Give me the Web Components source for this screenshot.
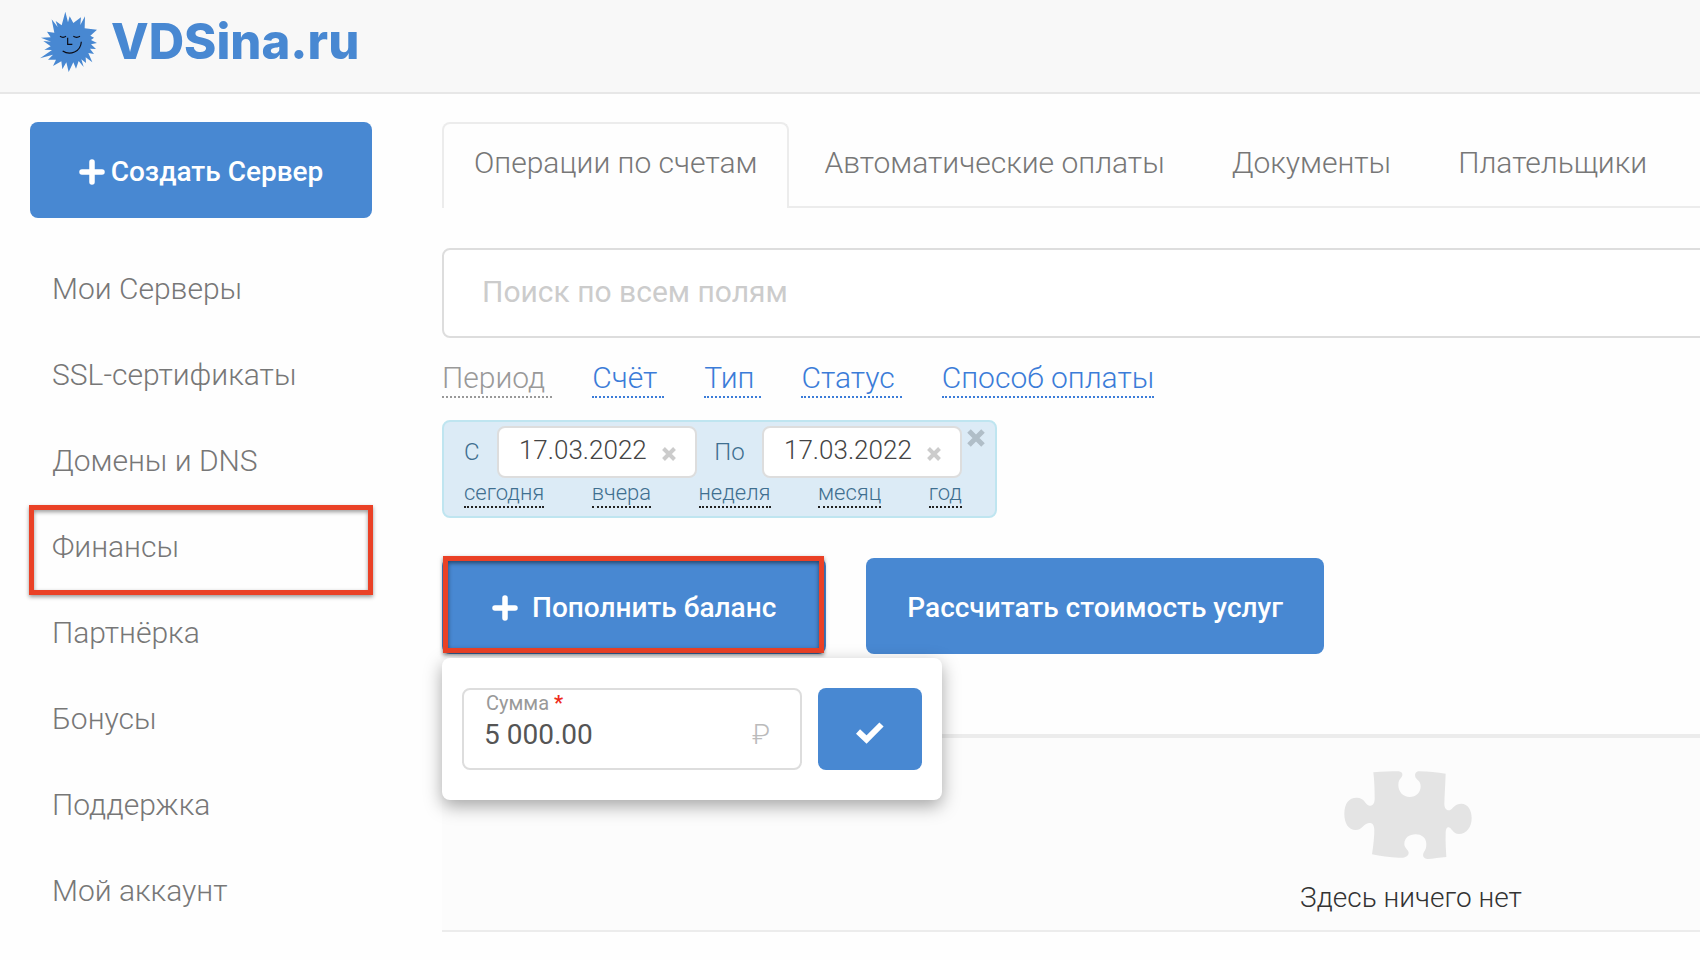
<!DOCTYPE html>
<html lang="ru">
<head>
<meta charset="utf-8">
<title>VDSina.ru — Финансы</title>
<style>
html { overflow-x: hidden; }
body { margin: 0; background: #fefefe; font-family: Roboto, "Open Sans", sans-serif; font-weight: 300; font-size: 30px; color: #777; }
.page { display: grid; grid-template-columns: 342px minmax(0, 1fr); column-gap: 70px; padding: 28px 0 20px 30px; overflow: hidden; }
aside { display: flex; flex-direction: column; gap: 28px; }
/* The operations column is wider than the visible area */
main { margin-right: -674px; display: flex; flex-direction: column; }
.actions { display: flex; gap: 40px; margin-top: 40px; position: relative; }
</style>
</head>
<body>
<site-header></site-header>
<div class="page">
  <aside>
    <action-button icon="plus">Создать Сервер</action-button>
    <side-nav></side-nav>
  </aside>
  <main>
    <tab-bar></tab-bar>
    <search-field></search-field>
    <filter-links></filter-links>
    <period-filter></period-filter>
    <div class="actions">
      <action-button icon="plus" spaced marked>Пополнить баланс</action-button>
      <action-button>Рассчитать стоимость услуг</action-button>
      <balance-popup></balance-popup>
    </div>
    <empty-table>Здесь ничего нет</empty-table>
  </main>
</div>
<script>
const define = (name, html) => customElements.define(name, class extends HTMLElement {
  constructor() {
    super();
    const t = document.createElement('template');
    t.innerHTML = html;
    this.attachShadow({ mode: 'open' }).append(t.content.cloneNode(true));
  }
});

define('site-header', `
<style>
:host { display: block; background: #f8f8f8; border-bottom: 2px solid #e7e7e7; }
a { display: flex; align-items: center; gap: 13px; height: 92px; box-sizing: border-box; padding: 0 40px 8px; color: #4888d2; text-decoration: none; width: max-content; }
.name { font: 800 49px/56px Inter, sans-serif; }
</style>
<a href="#"><svg width="58" height="62" viewBox="60 34 174 186" aria-hidden="true">
<path fill="#4888d2" d="M136 36L144 68L149 50L160 70L183 53L181 76L195 50L194 86L231 90L211 108L222 114L213 121L231 130L213 134L228 148L210 147L222 163L205 160L217 188L197 173L198 190L184 179L191 202L176 184L168 207L160 188L146 217L139 188L127 209L124 185L99 199L108 180L84 180L99 165L60 176L96 151L73 150L92 140L70 124L93 126L63 114L92 113L81 96L103 99L95 59L113 82L107 64L125 77Z"/>
<path fill="none" stroke="#0b0b14" stroke-width="3.5" d="M120 110q9 6 18 0M160 110q10 6 20 0M143 114v20h14M128 154c22 14 54 3 56-28"/>
</svg><span class="name">VDSina.ru</span></a>`);

customElements.define('action-button', class extends HTMLElement {
  constructor() {
    super();
    this.attachShadow({ mode: 'open' }).innerHTML = `
<style>
:host { display: block; position: relative; }
button { display: flex; align-items: center; justify-content: center; gap: 6px; width: 100%; height: 96px; padding: 4px 41px 0; border: 0; border-radius: 8px; background: #4888d2; color: #fff; font: 500 28px/36px Roboto, sans-serif; white-space: nowrap; }
:host([spaced]) button { gap: 14px; padding: 4px 50px 0; }
:host([marked])::after { content: ""; position: absolute; inset: -2px 2px 1px 1px; border: 5px solid #ea4126; box-shadow: 0 2px 4px rgba(0,0,0,.5), inset 0 2px 4px rgba(0,0,0,.5); pointer-events: none; }
svg { display: block; }
</style>
<button type="button">${this.getAttribute('icon') === 'plus' ? '<svg width="26" height="26" viewBox="0 0 26 26" aria-hidden="true"><path stroke="#fff" stroke-width="5.5" stroke-linecap="round" d="M13 3v20M3 13h20"/></svg>' : ''}<slot></slot></button>`;
  }
});

define('side-nav', `
<style>
:host { display: block; }
nav { display: flex; flex-direction: column; }
a { display: flex; align-items: center; height: 86px; box-sizing: border-box; padding: 0 0 2px 22px; color: #777; text-decoration: none; position: relative; }
a.marked::after { content: ""; position: absolute; inset: 1px -1px -5px -1px; border: 5px solid #ea4126; box-shadow: 0 2px 4px rgba(0,0,0,.4), inset 0 2px 4px rgba(0,0,0,.4); }
</style>
<nav><a href="#">Мои Серверы</a><a href="#">SSL-сертификаты</a><a href="#">Домены и DNS</a><a href="#" class="marked">Финансы</a><a href="#">Партнёрка</a><a href="#">Бонусы</a><a href="#">Поддержка</a><a href="#">Мой аккаунт</a></nav>`);

define('tab-bar', `
<style>
:host { display: block; }
nav { display: flex; gap: 3px; border-bottom: 2px solid #ececec; }
a { padding: 21px 30px 25px; line-height: 36px; border: 2px solid transparent; border-bottom: 0; border-radius: 8px 8px 0 0; color: #777; text-decoration: none; white-space: nowrap; }
a[aria-current] { border-color: #ececec; background: #fefefe; margin-bottom: -2px; }
</style>
<nav><a href="#" aria-current="page">Операции по счетам</a><a href="#">Автоматические оплаты</a><a href="#">Документы</a><a href="#">Плательщики</a></nav>`);

define('search-field', `
<style>
:host { display: block; margin-top: 40px; }
input { display: block; box-sizing: border-box; width: 100%; height: 90px; padding: 0 38px 4px; border: 2px solid #ddd; border-radius: 8px; background: #fff; color: #555; font: 400 30px/36px Roboto, sans-serif; outline: 0; }
input::placeholder { color: #ccc; opacity: 1; }
</style>
<input type="search" placeholder="Поиск по всем полям" aria-label="Поиск по всем полям">`);

define('filter-links', `
<style>
:host { display: flex; gap: 40px; margin-top: 20px; line-height: 36px; }
a { color: #3b7cd8; text-decoration: none; padding: 2px 7px 0 0; border-bottom: 2px dotted; white-space: nowrap; }
a:last-child { padding-right: 0; }
a.on { color: #999; }
</style>
<a href="#" class="on">Период</a><a href="#">Счёт</a><a href="#">Тип</a><a href="#">Статус</a><a href="#">Способ оплаты</a>`);

define('period-filter', `
<style>
:host { display: flex; align-items: flex-start; gap: 5px; box-sizing: border-box; width: 555px; height: 98px; margin-top: 22px; padding: 4px 10px 0 20px; background: #dcebf6; border: 2px solid #bfe5f0; border-radius: 8px; color: #3f6f90; }
.body { display: flex; flex-direction: column; gap: 2px; width: 499px; }
.row { display: flex; justify-content: space-between; align-items: center; }
label { font-size: 24px; line-height: 28px; }
.date { display: flex; align-items: center; gap: 12px; box-sizing: border-box; width: 200px; height: 52px; padding: 0 19px 0 20px; background: #fff; border: 2px solid #ddd; border-radius: 8px; }
input { flex: 1; min-width: 0; padding: 0 0 4px; border: 0; background: none; color: #444; font: 300 26px/32px Roboto, sans-serif; outline: 0; }
button { padding: 0; border: 0; background: none; display: block; }
.x { padding-top: 4px; }
.close { margin-top: 3px; }
svg { display: block; }
a { font-size: 22px; line-height: 26px; color: #3f6f90; text-decoration: none; border-bottom: 2px dotted #222; }
</style>
<div class="body">
<div class="row"><label for="from">С</label><span class="date"><input id="from" value="17.03.2022"><button type="button" class="x" aria-label="Очистить"><svg width="14" height="14" viewBox="0 0 14 14"><path stroke="#ccc" stroke-width="4" d="M1.500 1.500l11 11M12.500 1.500l-11 11"/></svg></button></span>
<label for="to">По</label><span class="date"><input id="to" value="17.03.2022"><button type="button" class="x" aria-label="Очистить"><svg width="14" height="14" viewBox="0 0 14 14"><path stroke="#ccc" stroke-width="4" d="M1.500 1.500l11 11M12.500 1.500l-11 11"/></svg></button></span></div>
<div class="row"><a href="#">сегодня</a><a href="#">вчера</a><a href="#">неделя</a><a href="#">месяц</a><a href="#">год</a></div>
</div>
<button type="button" class="close" aria-label="Закрыть"><svg width="18" height="18" viewBox="0 0 18 18"><path stroke="#b0bec8" stroke-width="5" d="M2 2l14 14M16 2L2 16"/></svg></button>`);

define('balance-popup', `
<style>
:host { position: absolute; left: 0; top: 100px; z-index: 2; display: block; }
form { display: flex; gap: 16px; box-sizing: border-box; width: 500px; padding: 30px 20px; background: #fff; border-radius: 8px; box-shadow: 0 6px 18px rgba(0,0,0,.35); }
.field { flex: 1; display: grid; grid-template-columns: 1fr auto; row-gap: 2px; align-content: start; box-sizing: border-box; height: 82px; padding: 1px 30px 0 20px; border: 2px solid #ddd; border-radius: 8px; }
label { grid-column: 1 / 3; padding-left: 2px; font-size: 20px; line-height: 24px; font-weight: 400; color: #999; }
label b { color: #ee2c1c; font-weight: 700; }
input { min-width: 0; padding: 0; border: 0; background: none; color: #555; font: 400 28px/36px Roboto, sans-serif; outline: 0; }
.cur { font-size: 28px; line-height: 36px; color: #bbb; }
button { width: 104px; height: 82px; padding: 8px 0 0; border: 0; border-radius: 8px; background: #4888d2; display: grid; place-items: center; }
</style>
<form><div class="field"><label for="sum">Сумма <b>*</b></label><input id="sum" value="5 000.00"><span class="cur">₽</span></div>
<button type="button" aria-label="Подтвердить"><svg width="28" height="22" viewBox="0 0 28 22"><path fill="none" stroke="#fff" stroke-width="6" d="M2 9.500L10.500 17.500L25.500 2.500"/></svg></button></form>`);

define('empty-table', `
<style>
:host { display: block; margin-top: 80px; }
section { display: flex; flex-direction: column; align-items: center; gap: 20px; padding: 33px 0 13px; background: #fcfcfc; border-top: 4px solid #ececec; border-bottom: 2px solid #ececec; color: #333; font-size: 28px; line-height: 38px; }
p { margin: 0; padding-left: 6px; }
svg { display: block; }
</style>
<section><svg width="128" height="88" viewBox="191 152 384 264" aria-hidden="true"><path fill="#e4e4e4" d="M279 156C306 154 334 153 354 153C366 154 369 163 364 170C358 177 354 182 354 194C354 215 369 230 388 230C407 230 421 217 421 198C421 183 411 179 406 172C401 161 407 153 417 153C444 153 470 156 496 160C495 190 493 222 492 250C492 266 501 273 511 268C520 263 523 250 543 250C563 250 574 270 574 293C574 320 559 341 536 341C517 341 515 323 505 321C498 321 496 329 496 340C495 364 497 387 498 410C478 412 459 415 442 416C429 416 425 404 431 395C436 388 438 382 438 371C438 352 423 342 406 342C386 342 372 353 372 371C372 383 384 388 385 397C385 407 374 412 364 412C333 413 302 408 275 402C279 377 282 349 282 329C281 313 277 308 266 308C250 309 247 329 226 329C204 329 192 308 192 281C192 250 205 232 229 232C254 232 254 254 268 256C280 257 283 246 283 234C283 208 282 181 279 156Z"/></svg><p><slot></slot></p></section>`);
</script>
</body>
</html>
